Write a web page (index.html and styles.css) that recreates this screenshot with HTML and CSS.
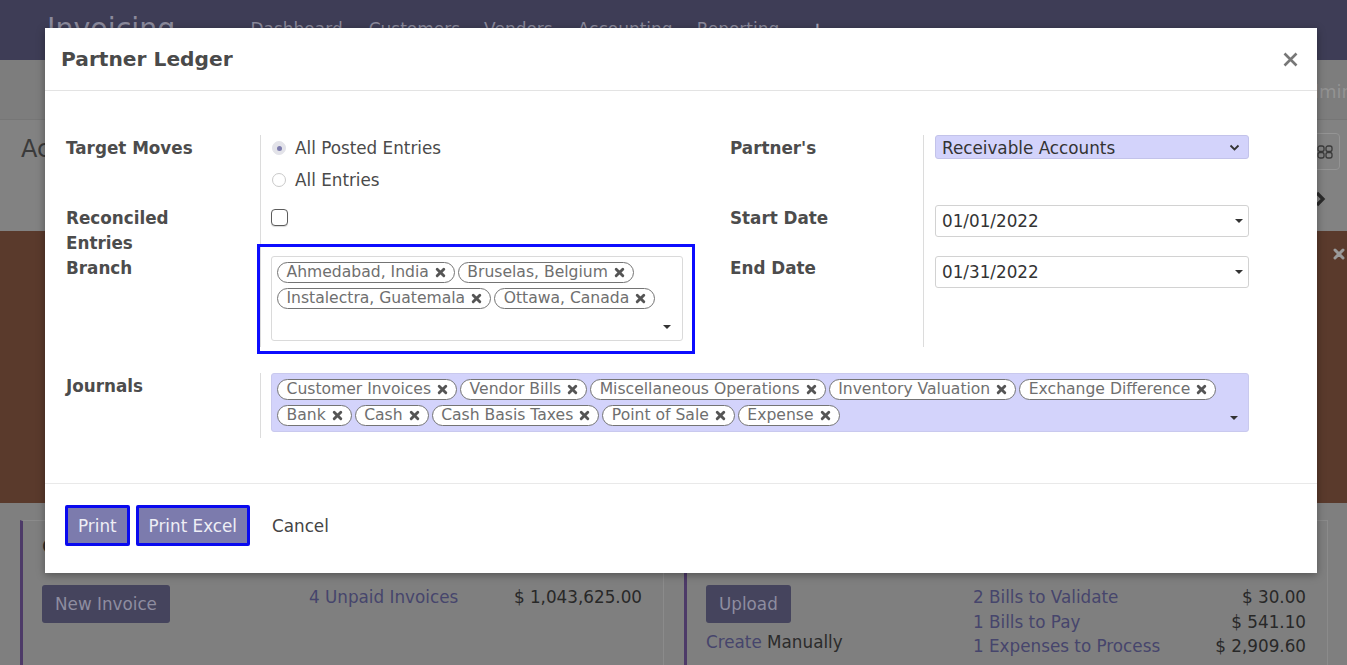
FILE: index.html
```html
<!DOCTYPE html>
<html lang="en">
<head>
<meta charset="utf-8">
<title>Partner Ledger</title>
<link rel="stylesheet" href="styles.css">
</head>
<body>
<div class="app">
  <header class="navbar">
    <span class="brand">Invoicing</span>
    <nav class="menu">
      <span>Dashboard</span><span>Customers</span><span>Vendors</span><span>Accounting</span><span>Reporting</span><span class="plus">+</span>
    </nav>
  </header>
  <div class="cp-top"><span class="cp-user">Admin</span></div>
  <div class="cp-bottom">
    <div class="cp-title">Accounting</div>
    <div class="cp-tools">
      <span class="view-btn">
        <svg width="16" height="14" viewBox="0 0 16 14"><g fill="none" stroke="#3a3a3a" stroke-width="1.3"><rect x="1" y="1" width="6" height="5.5" rx="2"/><rect x="9" y="1" width="6" height="5.5" rx="2"/><rect x="1" y="7.5" width="6" height="5.5" rx="2"/><rect x="9" y="7.5" width="6" height="5.5" rx="2"/></g></svg>
      </span>
      <span class="pager-next">
        <svg width="12" height="16" viewBox="0 0 12 16"><polyline points="3,2 9,8 3,14" fill="none" stroke="#2a2a2a" stroke-width="3.2"/></svg>
      </span>
    </div>
  </div>
  <div class="banner">
    <span class="banner-close">
      <svg width="12" height="12" viewBox="0 0 12 12"><path d="M2 2L10 10M10 2L2 10" stroke="#9a9a9a" stroke-width="3" stroke-linecap="round"/></svg>
    </span>
  </div>
  <div class="dashboard">
    <section class="card">
      <div class="card-title">Customer Invoices</div>
      <div class="card-body">
        <div class="card-actions"><span class="dash-btn">New Invoice</span></div>
        <div class="card-stats">
          <div class="stat"><span class="stat-link">4 Unpaid Invoices</span><span class="stat-amount">$ 1,043,625.00</span></div>
        </div>
      </div>
    </section>
    <section class="card">
      <div class="card-title">Vendor Bills</div>
      <div class="card-body">
        <div class="card-actions">
          <span class="dash-btn">Upload</span>
          <div class="create-line"><span class="stat-link">Create</span> Manually</div>
        </div>
        <div class="card-stats">
          <div class="stat"><span class="stat-link">2 Bills to Validate</span><span class="stat-amount">$ 30.00</span></div>
          <div class="stat"><span class="stat-link">1 Bills to Pay</span><span class="stat-amount">$ 541.10</span></div>
          <div class="stat"><span class="stat-link">1 Expenses to Process</span><span class="stat-amount">$ 2,909.60</span></div>
        </div>
      </div>
    </section>
  </div>
</div>

<div class="modal">
  <div class="modal-header">
    <h4 class="modal-title">Partner Ledger</h4>
    <span class="modal-close">
      <svg width="15" height="15" viewBox="0 0 15 15"><path d="M1.5 1.5L13.5 13.5M13.5 1.5L1.5 13.5" stroke="#777" stroke-width="2.6"/></svg>
    </span>
  </div>
  <div class="modal-body">
    <div class="form-grid">
      <div class="label">Target Moves</div>
      <div class="value">
        <div class="radio-item"><span class="radio checked"></span>All Posted Entries</div>
        <div class="radio-item second"><span class="radio"></span>All Entries</div>
      </div>
      <div class="label r">Partner's</div>
      <div class="value r">
        <div class="select">Receivable Accounts
          <svg class="chev" width="11" height="7" viewBox="0 0 11 7"><polyline points="1.5,1.5 5.5,5.5 9.5,1.5" fill="none" stroke="#333" stroke-width="1.8"/></svg>
        </div>
      </div>

      <div class="label">Reconciled Entries</div>
      <div class="value"><span class="checkbox"></span></div>
      <div class="label r">Start Date</div>
      <div class="value r"><div class="date-input">01/01/2022<span class="caret"></span></div></div>

      <div class="label">Branch</div>
      <div class="value">
        <div class="highlight">
          <div class="field-tags branch">
            <span class="tag">Ahmedabad, India<svg viewBox="0 0 10 10"><path d="M2 2L8 8M8 2L2 8"/></svg></span>
            <span class="tag">Bruselas, Belgium<svg viewBox="0 0 10 10"><path d="M2 2L8 8M8 2L2 8"/></svg></span>
            <span class="tag">Instalectra, Guatemala<svg viewBox="0 0 10 10"><path d="M2 2L8 8M8 2L2 8"/></svg></span>
            <span class="tag">Ottawa, Canada<svg viewBox="0 0 10 10"><path d="M2 2L8 8M8 2L2 8"/></svg></span>
            <span class="tag-input"><span class="caret"></span></span>
          </div>
        </div>
      </div>
      <div class="label r">End Date</div>
      <div class="value r end"><div class="date-input">01/31/2022<span class="caret"></span></div></div>
    </div>

    <div class="journal-grid">
      <div class="label">Journals</div>
      <div class="value">
        <div class="field-tags journals">
          <span class="tag">Customer Invoices<svg viewBox="0 0 10 10"><path d="M2 2L8 8M8 2L2 8"/></svg></span>
          <span class="tag">Vendor Bills<svg viewBox="0 0 10 10"><path d="M2 2L8 8M8 2L2 8"/></svg></span>
          <span class="tag">Miscellaneous Operations<svg viewBox="0 0 10 10"><path d="M2 2L8 8M8 2L2 8"/></svg></span>
          <span class="tag">Inventory Valuation<svg viewBox="0 0 10 10"><path d="M2 2L8 8M8 2L2 8"/></svg></span>
          <span class="tag">Exchange Difference<svg viewBox="0 0 10 10"><path d="M2 2L8 8M8 2L2 8"/></svg></span>
          <span class="tag">Bank<svg viewBox="0 0 10 10"><path d="M2 2L8 8M8 2L2 8"/></svg></span>
          <span class="tag">Cash<svg viewBox="0 0 10 10"><path d="M2 2L8 8M8 2L2 8"/></svg></span>
          <span class="tag">Cash Basis Taxes<svg viewBox="0 0 10 10"><path d="M2 2L8 8M8 2L2 8"/></svg></span>
          <span class="tag">Point of Sale<svg viewBox="0 0 10 10"><path d="M2 2L8 8M8 2L2 8"/></svg></span>
          <span class="tag">Expense<svg viewBox="0 0 10 10"><path d="M2 2L8 8M8 2L2 8"/></svg></span>
          <span class="tag-input"><span class="caret"></span></span>
        </div>
      </div>
    </div>
  </div>
  <div class="modal-footer">
    <button class="btn primary">Print</button>
    <button class="btn primary">Print Excel</button>
    <button class="btn link">Cancel</button>
  </div>
</div>
</body>
</html>
```
FILE: styles.css
```css
* { box-sizing: border-box; }
html, body { margin: 0; padding: 0; }
body {
  width: 1347px;
  height: 665px;
  overflow: hidden;
  background: #7f7f7f;
  font-family: "DejaVu Sans", sans-serif;
  font-size: 16.8px;
  position: relative;
}

/* ---------- background app (dimmed by the modal backdrop) ---------- */
.app { width: 1347px; }
.navbar {
  height: 60px;
  background: #3e3d56;
  display: flex;
  align-items: flex-start;
  padding-left: 47px;
  color: #8b8a9c;
}
.brand { font-size: 28.5px; line-height: 1; margin-top: 15px; }
.menu { display: flex; margin-left: 75px; gap: 26px; font-size: 17px; line-height: 1; margin-top: 21px; }
.menu span:nth-child(3) { margin-left: -2px; }
.menu span:nth-child(4) { margin-left: -1px; }
.menu span:nth-child(5) { margin-left: -2px; }
.menu .plus { font-weight: bold; margin-left: 5px; color: #a7a6b6; }

.cp-top {
  height: 60px;
  background: #7d7d7d;
  border-bottom: 1px solid #767676;
  display: flex;
  justify-content: flex-end;
  align-items: center;
}
.cp-user { color: #939393; font-size: 18px; margin-right: -6px; margin-top: 4px; }

.cp-bottom {
  height: 111px;
  background: #828282;
  display: flex;
  justify-content: space-between;
  padding: 13px 7px 0 21px;
}
.cp-title { font-size: 24px; color: #3a3a3a; line-height: 32px; white-space: nowrap; }
.cp-tools { display: flex; flex-direction: column; align-items: flex-start; gap: 21px; }
.view-btn {
  width: 34px; height: 37px;
  border: 1px solid #949494;
  border-radius: 4px;
  display: flex; align-items: center; justify-content: flex-end;
  padding-right: 6px;
}
.pager-next { margin-left: 8px; height: 16px; }

.banner {
  height: 272px;
  background: #5a3a2c;
  display: flex;
  justify-content: flex-end;
  padding: 13px 2px 0 0;
}
.banner-close { height: 12px; }

.dashboard {
  display: flex;
  gap: 20px;
  padding: 17px 19px 0 20px;
}
.card {
  flex: 1;
  height: 200px;
  border: 1px solid #8b8b8b;
  border-left: 3px solid #4d3a68;
  padding: 13px 21px 0 19px;
}
.card-title { font-size: 20px; line-height: 24px; color: #2a2a2a; margin-bottom: 27px; }
.card-body { display: grid; grid-template-columns: 267px 1fr; }
.dash-btn {
  display: inline-block;
  background: #45445d;
  color: #8e8da0;
  padding: 0 13px;
  height: 38px;
  line-height: 38px;
  border-radius: 3px;
}
.create-line { margin-top: 7px; line-height: 24px; color: #2b2b2b; }
.card-stats { display: flex; flex-direction: column; padding-top: 0; }
.stat { display: flex; justify-content: space-between; line-height: 24px; height: 24.5px; }
.stat-link { color: #46456c; }
.stat-amount { color: #282828; }

/* ---------- modal ---------- */
.modal {
  position: absolute;
  left: 45px;
  top: 28px;
  width: 1272px;
  height: 545px;
  background: #fff;
  display: flex;
  flex-direction: column;
  box-shadow: 0 2px 8px rgba(0, 0, 0, 0.35);
  color: #4a4a4a;
}
.modal-header {
  height: 63px;
  border-bottom: 1px solid #e3e3e3;
  display: flex;
  align-items: center;
  justify-content: space-between;
  padding: 0 19px 0 16px;
}
.modal-title { margin: 0; font-size: 20.2px; font-weight: bold; color: #4a4a4a; }
.modal-close { display: flex; }

.modal-body { flex: 1; padding: 44px 68px 0 21px; }

.form-grid {
  display: grid;
  grid-template-columns: 194px 438px 225px 326px;
  grid-template-rows: 70px 50px 92px;
}
.label {
  font-weight: bold;
  line-height: 25px;
  color: #4c4c4c;
  padding-right: 40px;
  padding-top: 1px;
}
.label.r { padding-left: 32px; }
.value { border-left: 1px solid #dcdcdc; padding-left: 10px; }
.value.r { padding-left: 11px; }

.radio-item { display: flex; align-items: center; height: 24px; gap: 9px; line-height: 24px; margin-top: 1px; }
.radio-item.second { margin-top: 8px; }
.radio {
  width: 14px; height: 14px;
  border-radius: 50%;
  border: 1px solid #c9c9c9;
  background: #fff;
  margin-left: 1px;
  display: flex; align-items: center; justify-content: center;
}
.radio.checked { background: #e3e3e9; border-color: #e3e3e9; }
.radio.checked::after {
  content: "";
  width: 5px; height: 5px;
  border-radius: 50%;
  background: #7c7bad;
}

.checkbox {
  display: block;
  width: 17px; height: 17px;
  margin-top: 4px;
  border: 1.5px solid #5c5c5c;
  border-radius: 4px;
  background: #fff;
  box-shadow: 0 1px 1px rgba(0,0,0,0.15);
}

.select {
  position: relative;
  height: 24px;
  line-height: 24px;
  background: #d3d3fb;
  border: 1px solid #c3c3ea;
  border-radius: 3px;
  padding-left: 6px;
  color: #333;
}
.select .chev { position: absolute; right: 8px; top: 8px; }

.date-input {
  display: flex;
  justify-content: space-between;
  align-items: center;
  height: 32px;
  border: 1px solid #d2d2d2;
  border-radius: 3px;
  padding: 0 5px 0 6px;
  color: #333;
}
.value.end .date-input { margin-top: 1px; }

.caret {
  width: 0; height: 0;
  border-top: 4px solid #333;
  border-left: 4px solid transparent;
  border-right: 4px solid transparent;
}

/* blue highlight frame drawn around the Branch field */
.highlight {
  width: 438px;
  margin: -11px 0 0 -14px;
  border: 3px solid #0d0dff;
  padding: 9px 9px 10px 11px;
}

.field-tags {
  display: flex;
  flex-wrap: wrap;
  align-items: flex-start;
  align-content: flex-start;
  border: 1px solid #dadada;
  border-radius: 3px;
  padding: 5px 5px 0 5px;
}
.field-tags.branch { width: 412px; }
.field-tags.journals {
  width: 978px;
  background: #d3d3fb;
  border-color: #c9c9ee;
}
.tag {
  display: inline-flex;
  align-items: center;
  height: 21px;
  margin: 0 3px 5px 0;
  padding: 0 8px 0 8.5px;
  border: 1.5px solid #747474;
  border-radius: 11px;
  background: #fff;
  color: #6f6f6f;
  font-size: 15.6px;
  line-height: 1;
  white-space: nowrap;
}
.tag svg {
  width: 11px; height: 11px;
  margin-left: 6px;
  fill: none;
  stroke: #555;
  stroke-width: 2.6;
  stroke-linecap: round;
}
.tag-input {
  flex: 1 1 40px;
  min-width: 40px;
  height: 26px;
  display: flex;
  align-items: center;
  justify-content: flex-end;
  padding-right: 6px;
}
.journals .tag-input { padding-right: 5px; }

.journal-grid {
  display: grid;
  grid-template-columns: 194px 989px;
  margin-top: 26px;
}
.journal-grid .value { padding-bottom: 6px; }

.modal-footer {
  height: 90px;
  border-top: 1px solid #e9e9e9;
  display: flex;
  align-items: flex-start;
  padding: 21px 0 0 20px;
  gap: 6px;
}
.btn {
  font-family: "DejaVu Sans", sans-serif;
  font-size: 16.8px;
  height: 41px;
  padding: 0 10px;
  border-radius: 2px;
  cursor: pointer;
}
.btn.primary {
  background: #7c7bad;
  color: #eeeef5;
  border: 3px solid #0a0aef;
}
.btn.link {
  background: none;
  border: none;
  color: #444;
  margin-left: 6px;
}
```
